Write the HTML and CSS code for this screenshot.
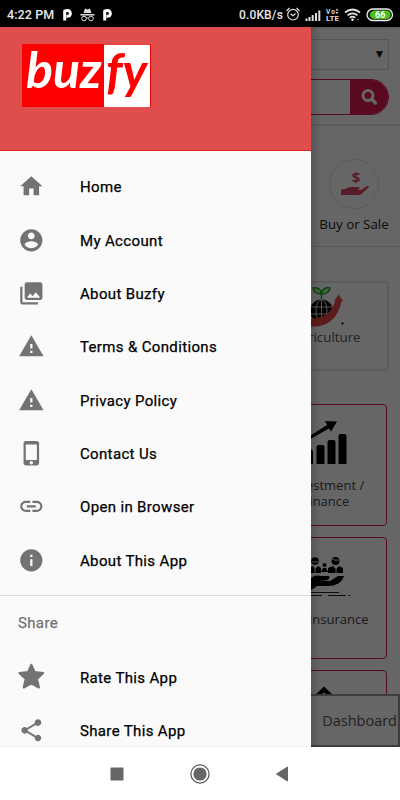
FILE: index.html
```html
<!DOCTYPE html>
<html lang="en">
<head>
<meta charset="utf-8">
<title>Buzfy</title>
<link rel="stylesheet" href="styles.css">
</head>
<body>
<div class="phone">
  <header class="status">
    <span class="clock">4:22 PM</span>
    <svg class="status-left" width="52" height="16" viewBox="0 0 52 16">
      <g fill="none" stroke="#fff" stroke-width="3" stroke-linejoin="round"><path d="M3.700 13.500V4Q8.800 2.500 9.300 6T5.500 9.200"/><path d="M43.700 13.500V4Q48.800 2.500 49.300 6T45.500 9.200"/></g>
      <path d="M22.500 6L24 1.500L26.500 2.500L29 1.500L30.500 6ZM19.500 7h14v1.500h-14z" fill="#ddd"/>
      <g fill="none" stroke="#ddd" stroke-width="1"><circle cx="23" cy="11.500" r="2.300"/><circle cx="30" cy="11.500" r="2.300"/><path d="M25.500 11h2"/></g>
    </svg>
    <span class="speed">0.0KB/s</span>
    <svg class="status-right" width="110" height="18" viewBox="0 0 110 18">
      <g fill="none" stroke="#ddd" stroke-width="1.200"><circle cx="8" cy="8.700" r="5.300"/><path d="M1.500 5L4.500 2M14.500 5L11.500 2M5.500 7.800L8 9.800L10.500 7.500"/></g>
      <g fill="#ddd"><path d="M20.500 12.500h2V15h-2zM23.500 11h2v4h-2zM26.700 9h2v6h-2zM30 7h2v8h-2zM33.300 4.500h2v10.500h-2z"/></g>
      <g class="volte" fill="#ddd"><text x="41" y="7.500" textLength="9">Vo</text><text x="41" y="15" textLength="13" lengthAdjust="spacingAndGlyphs">LTE</text><path d="M52 2.500l1.500 2h-3zM52 8l1.500-2h-3z"/></g>
      <g fill="none" stroke="#e5e5e5" stroke-width="1.700"><path d="M60 6.500Q67.500 .5 75 6.500M62.500 9.300Q67.500 5.300 72.500 9.300M64.800 11.800Q67.500 9.500 70.200 11.800"/></g>
      <circle cx="67.500" cy="13.800" r="1.200" fill="#fff"/><circle cx="73" cy="13.500" r=".8" fill="#aaa"/>
      <rect x="82" y="3" width="25.500" height="11.500" rx="5.700" fill="#161616" stroke="#eee" stroke-width="1.300"/>
      <path d="M89 4.500h12q4.500 0 4.500 4.200T101 13H89q-4-1-4-4.200T89 4.500z" fill="#46c31b"/>
      <text class="battery" x="90" y="12">66</text>
    </svg>
  </header>

  <div class="stage">
    <main class="page">
      <div class="toolbar">
        <div class="select">▼</div>
        <div class="search"><div class="search-button">
          <svg width="18" height="18" viewBox="0 0 18 18"><circle cx="8" cy="7.500" r="5" fill="none" stroke="#fff" stroke-width="3"/><path d="M11.500 11L15.500 15" stroke="#fff" stroke-width="3.200" stroke-linecap="round"/></svg>
        </div></div>
      </div>
      <div class="quick">
        <div class="quick-item">
          <div class="disc"><svg width="28" height="27" viewBox="0 0 28 27"><text class="dollar" x="15" y="14" text-anchor="middle">$</text><path fill="#df4464" d="M0 20.500L4.500 20Q8 17.500 11 18H17Q19 18 18.500 19.500Q18 21 14 21H20L25.500 17.500Q27.500 16.500 28 18L21 24.500Q20 26 17 26H0Z"/></svg></div>
          <span>Buy or Sale</span>
        </div>
      </div>
      <div class="featured">
        <svg width="60" height="42" viewBox="0 0 60 42">
          <circle cx="29.500" cy="24" r="11.500" fill="#000"/>
          <g fill="none" stroke="#ddd" stroke-width="1"><ellipse cx="29.500" cy="24" rx="5.500" ry="11.500"/><path d="M29.500 12v24M18 20h23M18 27h23"/></g>
          <path d="M29.500 12V7Q22 7 21 1Q28 0 29.500 6Q31 0 38 1Q37 7 29.500 7" fill="#afffb0" stroke="#15a82c" stroke-width="1.500"/>
          <path d="M8 30Q35 37 43.500 14L41.500 15L46.500 7.500L51.500 14.500L49.500 14Q43 46 8 38Z" fill="#e84848"/>
          <circle cx="50.500" cy="36.500" r="1.200" fill="#333"/>
        </svg>
        <span class="caption">Agriculture</span>
      </div>
      <div class="cards">
        <div class="card">
          <svg width="60" height="46" viewBox="0 0 60 46"><path d="M9 32.500q0-2 2-2h4q2 0 2 2V45H9zM20.500 28q0-2 2-2h4q2 0 2 2V45h-8zM31.500 23q0-2 2-2h4q2 0 2 2V45h-8zM42.500 17q0-2 2-2h4q2 0 2 2V45h-8zM9 20L31 6L29 2L41 2.500L35 12.500L33 9.500L11 22z"/></svg>
          <span>Investment /<br>Finance</span>
        </div>
        <div class="card insurance">
          <svg width="66" height="42" viewBox="0 0 66 42">
            <circle cx="22" cy="5" r="3.800"/><circle cx="42.500" cy="5" r="4"/><circle cx="31.500" cy="9" r="2"/>
            <path d="M15 17V12l5-2 2 3 3-3 3 2v5zM35 17v-5l5-2 3 3 3-3 4 2v5zM28 16l2-4h3l2 4zM15 25Q21 18 28 20H36Q38 23 33 24H27L37 25L45 20H51Q48 30 34 30H24L17 35z"/>
            <path d="M19 6h6M39 3q3 2 7 1M22 12v5M43 12v5" stroke="#ddd" stroke-width="1" fill="none"/>
            <path d="M12 36.500h34M12 39.500h17M35 39.500h18M55.500 39.500h2" stroke="#222"/>
          </svg>
          <span>Life Insurance</span>
        </div>
        <div class="card property"><svg width="30" height="20" viewBox="0 0 30 20"><path d="M3 11L13 1.500L23 11H17L13 7.500L9 11z"/></svg></div>
      </div>
      <div class="dashboard">Dashboard</div>
    </main>
    <div class="scrim"></div>

    <aside class="drawer">
      <div class="brand">
        <div class="logo"><span class="logo-left">buz</span><span class="logo-right">fy</span></div>
      </div>
      <nav class="menu">
        <a class="item"><svg viewBox="0 0 24 24"><path d="M10 20v-6h4v6h5v-8h3L12 3 2 12h3v8z"/></svg><span>Home</span></a>
        <a class="item"><svg viewBox="0 0 24 24"><path d="M12 2C6.480 2 2 6.480 2 12s4.480 10 10 10 10-4.480 10-10S17.520 2 12 2zm0 3c1.660 0 3 1.340 3 3s-1.340 3-3 3-3-1.340-3-3 1.340-3 3-3zm0 14.200c-2.500 0-4.710-1.280-6-3.220.030-1.990 4-3.080 6-3.080 1.990 0 5.970 1.090 6 3.080-1.290 1.940-3.500 3.220-6 3.220z"/></svg><span>My Account</span></a>
        <a class="item"><svg viewBox="0 0 24 24"><path d="M22 16V4c0-1.100-.9-2-2-2H8c-1.100 0-2 .9-2 2v12c0 1.100.9 2 2 2h12c1.100 0 2-.9 2-2zm-11-4l2.030 2.710L16 11l4 5H8l3-4zM2 6v14c0 1.100.9 2 2 2h14v-2H4V6H2z"/></svg><span>About Buzfy</span></a>
        <a class="item"><svg viewBox="0 0 24 24"><path d="M1 21h22L12 2 1 21zm12-3h-2v-2h2v2zm0-4h-2v-4h2v4z"/></svg><span>Terms &amp; Conditions</span></a>
        <a class="item"><svg viewBox="0 0 24 24"><path d="M1 21h22L12 2 1 21zm12-3h-2v-2h2v2zm0-4h-2v-4h2v4z"/></svg><span>Privacy Policy</span></a>
        <a class="item"><svg viewBox="0 0 24 24"><path d="M16.500 1h-9C6.120 1 5 1.800 5 3v18c0 1.200 1 2 2.500 2h9c1.500 0 2.500-.8 2.500-2V3c0-1.200-1.120-2-2.500-2zM12 22c-.83 0-1.500-.67-1.500-1.500S11.170 19 12 19s1.500.67 1.500 1.500S12.830 22 12 22zm5-4H7V4h10v14z"/></svg><span>Contact Us</span></a>
        <a class="item"><svg viewBox="0 0 24 24"><path d="M3.900 12c0-1.710 1.390-3.100 3.100-3.100h4V7H7c-2.760 0-5 2.240-5 5s2.240 5 5 5h4v-1.900H7c-1.710 0-3.100-1.390-3.100-3.100zM8 13h8v-2H8v2zm9-6h-4v1.900h4c1.710 0 3.100 1.390 3.100 3.100s-1.390 3.100-3.100 3.100h-4V17h4c2.760 0 5-2.240 5-5s-2.240-5-5-5z"/></svg><span>Open in Browser</span></a>
        <a class="item"><svg viewBox="0 0 24 24"><path d="M12 2C6.480 2 2 6.480 2 12s4.480 10 10 10 10-4.480 10-10S17.520 2 12 2zm1 15h-2v-6h2v6zm0-8h-2V7h2v2z"/></svg><span>About This App</span></a>
      </nav>
      <section class="share">
        <h2>Share</h2>
        <a class="item"><svg viewBox="0 0 24 24"><path stroke="#737373" stroke-width="2" stroke-linejoin="round" d="M12 1.700L14.900 8.300L22.700 9L17 14.300L18.800 22L12 18.200L5.200 22L7 14.300L1.300 9L9.100 8.300Z"/></svg><span>Rate This App</span></a>
        <a class="item"><svg viewBox="0 0 24 24"><path d="M18 16.080c-.76 0-1.440.3-1.960.77L8.910 12.700c.050-.23.090-.46.090-.7s-.040-.47-.090-.7l7.050-4.110c.54.5 1.250.81 2.040.81 1.660 0 3-1.340 3-3s-1.340-3-3-3-3 1.340-3 3c0 .24.040.47.090.7L8.040 9.810C7.500 9.310 6.790 9 6 9c-1.660 0-3 1.340-3 3s1.340 3 3 3c.79 0 1.500-.31 2.040-.81l7.120 4.160c-.050.210-.080.430-.080.650 0 1.610 1.310 2.920 2.920 2.920s2.920-1.310 2.920-2.920-1.310-2.920-2.920-2.920z"/></svg><span>Share This App</span></a>
      </section>
    </aside>
  </div>

  <footer class="navbar">
    <svg width="14" height="14" viewBox="0 0 14 14"><rect x=".5" y=".5" width="13" height="13" rx=".5" fill="#666"/></svg>
    <svg width="20" height="20" viewBox="0 0 20 20"><circle cx="10" cy="10" r="9.100" fill="none" stroke="#555" stroke-width="1.200"/><circle cx="10" cy="10" r="6.600" fill="#666"/></svg>
    <svg width="14" height="16" viewBox="0 0 14 16"><path d="M1.500 8L12.500 1v14z" fill="#666" stroke="#666" stroke-linejoin="round"/></svg>
  </footer>
</div>
</body>
</html>
```

FILE: styles.css
```css
* { box-sizing: border-box; }
body { margin: 0; font-family: Roboto, "Liberation Sans", sans-serif; }
svg { display: block; flex: none; }
.phone { width: 400px; height: 800px; display: flex; flex-direction: column; overflow: hidden; background: #fff; }

.status { height: 27px; flex: none; background: #000; color: #e8e8e8; display: flex; align-items: center; padding: 2px 5px 0 7px; font-size: 12.5px; font-weight: 500; white-space: nowrap; }
.clock { width: 47px; letter-spacing: .1px; }
.status-left { margin-left: 7px; }
.speed { margin-left: auto; font-size: 12px; letter-spacing: .15px; }
.status-right { margin-left: 2px; }
.volte { font-size: 6.500px; font-weight: 700; }
.battery { font-size: 9px; font-weight: 700; fill: #fff; }

.stage { position: relative; height: 720px; flex: none; overflow: hidden; }
.page { height: 720px; width: 400px; background: #fff; display: flex; flex-direction: column; overflow: hidden; font-family: "Open Sans", "Noto Sans", sans-serif; font-size: 13px; color: #222; border-top: 1px solid #ddd; }
.scrim { position: absolute; inset: 0; background: linear-gradient(90deg, rgba(0,0,0,.15) 311px, transparent 321px), rgba(0,0,0,.6); }

.toolbar { height: 98px; flex: none; padding: 11px 11px 0; border-bottom: 2px solid #e6e6e6; }
.select { height: 31px; border: 1px solid #d5d5d5; text-align: right; padding-right: 5px; line-height: 29px; font-family: "DejaVu Sans", sans-serif; font-size: 9px; color: #000; }
.search { height: 36px; margin-top: 9px; border: 1px solid #df1752; border-radius: 18px; overflow: hidden; display: flex; justify-content: flex-end; }
.search-button { width: 38px; background: #df1752; display: flex; align-items: center; justify-content: center; }

.quick { height: 121px; flex: none; display: flex; justify-content: flex-end; padding: 33px 6px 0; border-bottom: 1px solid #dedede; }
.quick-item { width: 80px; display: flex; flex-direction: column; align-items: center; white-space: nowrap; line-height: 18px; font-size: 13.3px; }
.disc { width: 50px; height: 50px; border: 1px solid #e2e2e2; border-radius: 50%; display: flex; align-items: center; justify-content: center; margin-bottom: 6px; }
.disc svg { overflow: visible; margin: -4px 0 0 2px; }
.dollar { font: 700 15px "Open Sans", sans-serif; fill: #df4464; }

.featured { width: 134px; height: 90px; flex: none; margin: 34px 11px 0 auto; border: 2px solid #e6e6e6; border-radius: 4px; display: flex; flex-direction: column; align-items: center; padding-top: 4px; line-height: 18px; color: #555; font-size: 13.3px; }
.caption { padding-left: 9px; margin-top: -1px; }
.cards { flex: 1; min-height: 0; overflow: hidden; margin: 33px 13px 0 auto; width: 122px; display: flex; flex-direction: column; gap: 11px; }
.card { height: 122px; flex: none; border: 1px solid #df1752; border-radius: 4px; display: flex; flex-direction: column; align-items: center; padding-top: 14px; text-align: center; line-height: 16px; color: #444; white-space: nowrap; }
.card svg + span { margin-top: 12px; }
.card.insurance { padding-top: 18px; }
.card.insurance svg + span { margin-top: 13px; }
.card.property { padding-top: 14px; }
.dashboard { height: 53px; flex: none; border: 2px solid #999; background: #fff; text-align: right; padding-right: 1px; line-height: 49px; color: #555; font-size: 14.5px; }

.drawer { position: absolute; left: 0; top: 0; width: 311px; height: 720px; background: #fafafa; border-bottom: 1px solid #eee; overflow: hidden; }
.brand { height: 124px; background: #df4d4c; border-bottom: 1px solid #e01f1f; padding: 17px 0 0 22px; }
.logo { display: flex; width: 129px; height: 63px; font: italic 700 50px/50px Lato, sans-serif; }
.logo-left { width: 82px; padding-left: 4px; background: #f00; color: #fff; }
.logo-right { width: 47px; padding-left: 2px; background: #fff; color: #f00; border-right: 1px solid #e00; border-top: 1px solid #e44; }
.menu { padding: 9px 0 8px; border-bottom: 1px solid #dcdcdc; }
.item { height: 53.33px; display: flex; align-items: center; padding-left: 17.67px; gap: 35.67px; font-size: 15px; letter-spacing: .35px; color: #000; white-space: nowrap; }
.item span { padding-top: 1.500px; -webkit-text-stroke: .25px currentColor; }
.item svg { width: 26.67px; height: 26.67px; fill: #737373; }
.share h2 { margin: 0; height: 54.500px; line-height: 55px; padding-left: 18px; font-size: 15px; font-weight: 400; letter-spacing: .35px; color: #737373; -webkit-text-stroke: .25px currentColor; }

.navbar { height: 53px; flex: none; background: #fff; display: grid; grid-template-columns: 82px 83px 81px; justify-content: center; place-items: center; padding-right: 2px; }
```
